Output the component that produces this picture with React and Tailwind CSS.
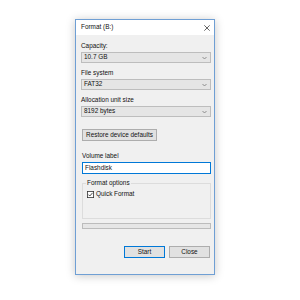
import React from "react";

// Small chevron used in the combo boxes
function Chevron() {
  return (
    <svg width="5" height="4" viewBox="0 0 5 4" className="shrink-0">
      <path d="M0.5 1 L2.5 3 L4.5 1" fill="none" stroke="#7a7a7a" strokeWidth="0.8" />
    </svg>
  );
}

// Read-only combo box (Windows 10 style)
function Select({ value }) {
  return (
    <div className="h-[11px] flex items-center justify-between bg-[#e5e5e5] border border-[#bdbdbd] pl-[2px] pr-[3px]">
      <span className="leading-none">{value}</span>
      <Chevron />
    </div>
  );
}

function Label({ children }) {
  return <div className="h-[8px] leading-[8px]">{children}</div>;
}

function App() {
  return (
    <div
      className="w-[300px] h-[300px] bg-white pl-[75px] pt-[19px] text-[6.4px] text-[#111]"
      style={{ fontFamily: '"Liberation Sans", Arial, sans-serif' }}
    >
      <div className="w-[140px] h-[256px] border border-[#6f9fd4] flex flex-col shadow-[0_1px_9px_rgba(0,0,0,0.22)]">
        {/* Title bar */}
        <div className="h-[15px] bg-white flex items-center justify-between pl-[5px] pr-[4px]">
          <span className="leading-none">Format (B:)</span>
          <svg width="6" height="6" viewBox="0 0 6 6">
            <path d="M0.3 0.3 L5.7 5.7 M5.7 0.3 L0.3 5.7" stroke="#222" strokeWidth="0.7" />
          </svg>
        </div>

        {/* Body */}
        <div className="flex-1 bg-[#f0f0f0] flex flex-col pl-[5px] pr-[3px] pt-[7px]">
          <Label>Capacity:</Label>
          <div className="mt-[2px]">
            <Select value="10.7 GB" />
          </div>

          <div className="mt-[6px]">
            <Label>File system</Label>
          </div>
          <div className="mt-[2px]">
            <Select value="FAT32" />
          </div>

          <div className="mt-[6px]">
            <Label>Allocation unit size</Label>
          </div>
          <div className="mt-[2px]">
            <Select value="8192 bytes" />
          </div>

          <button className="mt-[12px] ml-[1px] w-[75px] h-[12px] bg-[#e1e1e1] border border-[#adadad] flex items-center justify-center leading-none">
            Restore device defaults
          </button>

          <div className="mt-[11px] ml-[1px]">
            <Label>Volume label</Label>
          </div>
          <div className="mt-[2px] ml-[1px] h-[12px] bg-white border border-[#0078d7] flex items-center pl-[2px] leading-none">
            Flashdisk
          </div>

          <fieldset className="mt-[5px] ml-[1px] h-[40px] border border-[#dcdcdc] px-[2px]">
            <legend className="px-[1px] ml-[1px] leading-[8px]">Format options</legend>
            <div className="flex items-center gap-[2px] mt-[4px] ml-[2px]">
              <svg width="7" height="7" viewBox="0 0 7 7" className="shrink-0">
                <rect x="0.4" y="0.4" width="6.2" height="6.2" fill="#fff" stroke="#333" strokeWidth="0.8" />
                <path d="M1.4 3.6 L2.8 5 L5.6 1.8" fill="none" stroke="#222" strokeWidth="0.8" />
              </svg>
              <span className="leading-none">Quick Format</span>
            </div>
          </fieldset>

          <div className="mt-[4px] ml-[1px] h-[6px] bg-[#e6e6e6] border border-[#bcbcbc]" />

          <div className="mt-[17px] flex justify-end gap-[4px] pr-[1px]">
            <button className="w-[41px] h-[12px] bg-[#e1e1e1] border border-[#0078d7] flex items-center justify-center leading-none">
              Start
            </button>
            <button className="w-[41px] h-[12px] bg-[#e1e1e1] border border-[#adadad] flex items-center justify-center leading-none">
              Close
            </button>
          </div>
        </div>
      </div>
    </div>
  );
}

export default App;
